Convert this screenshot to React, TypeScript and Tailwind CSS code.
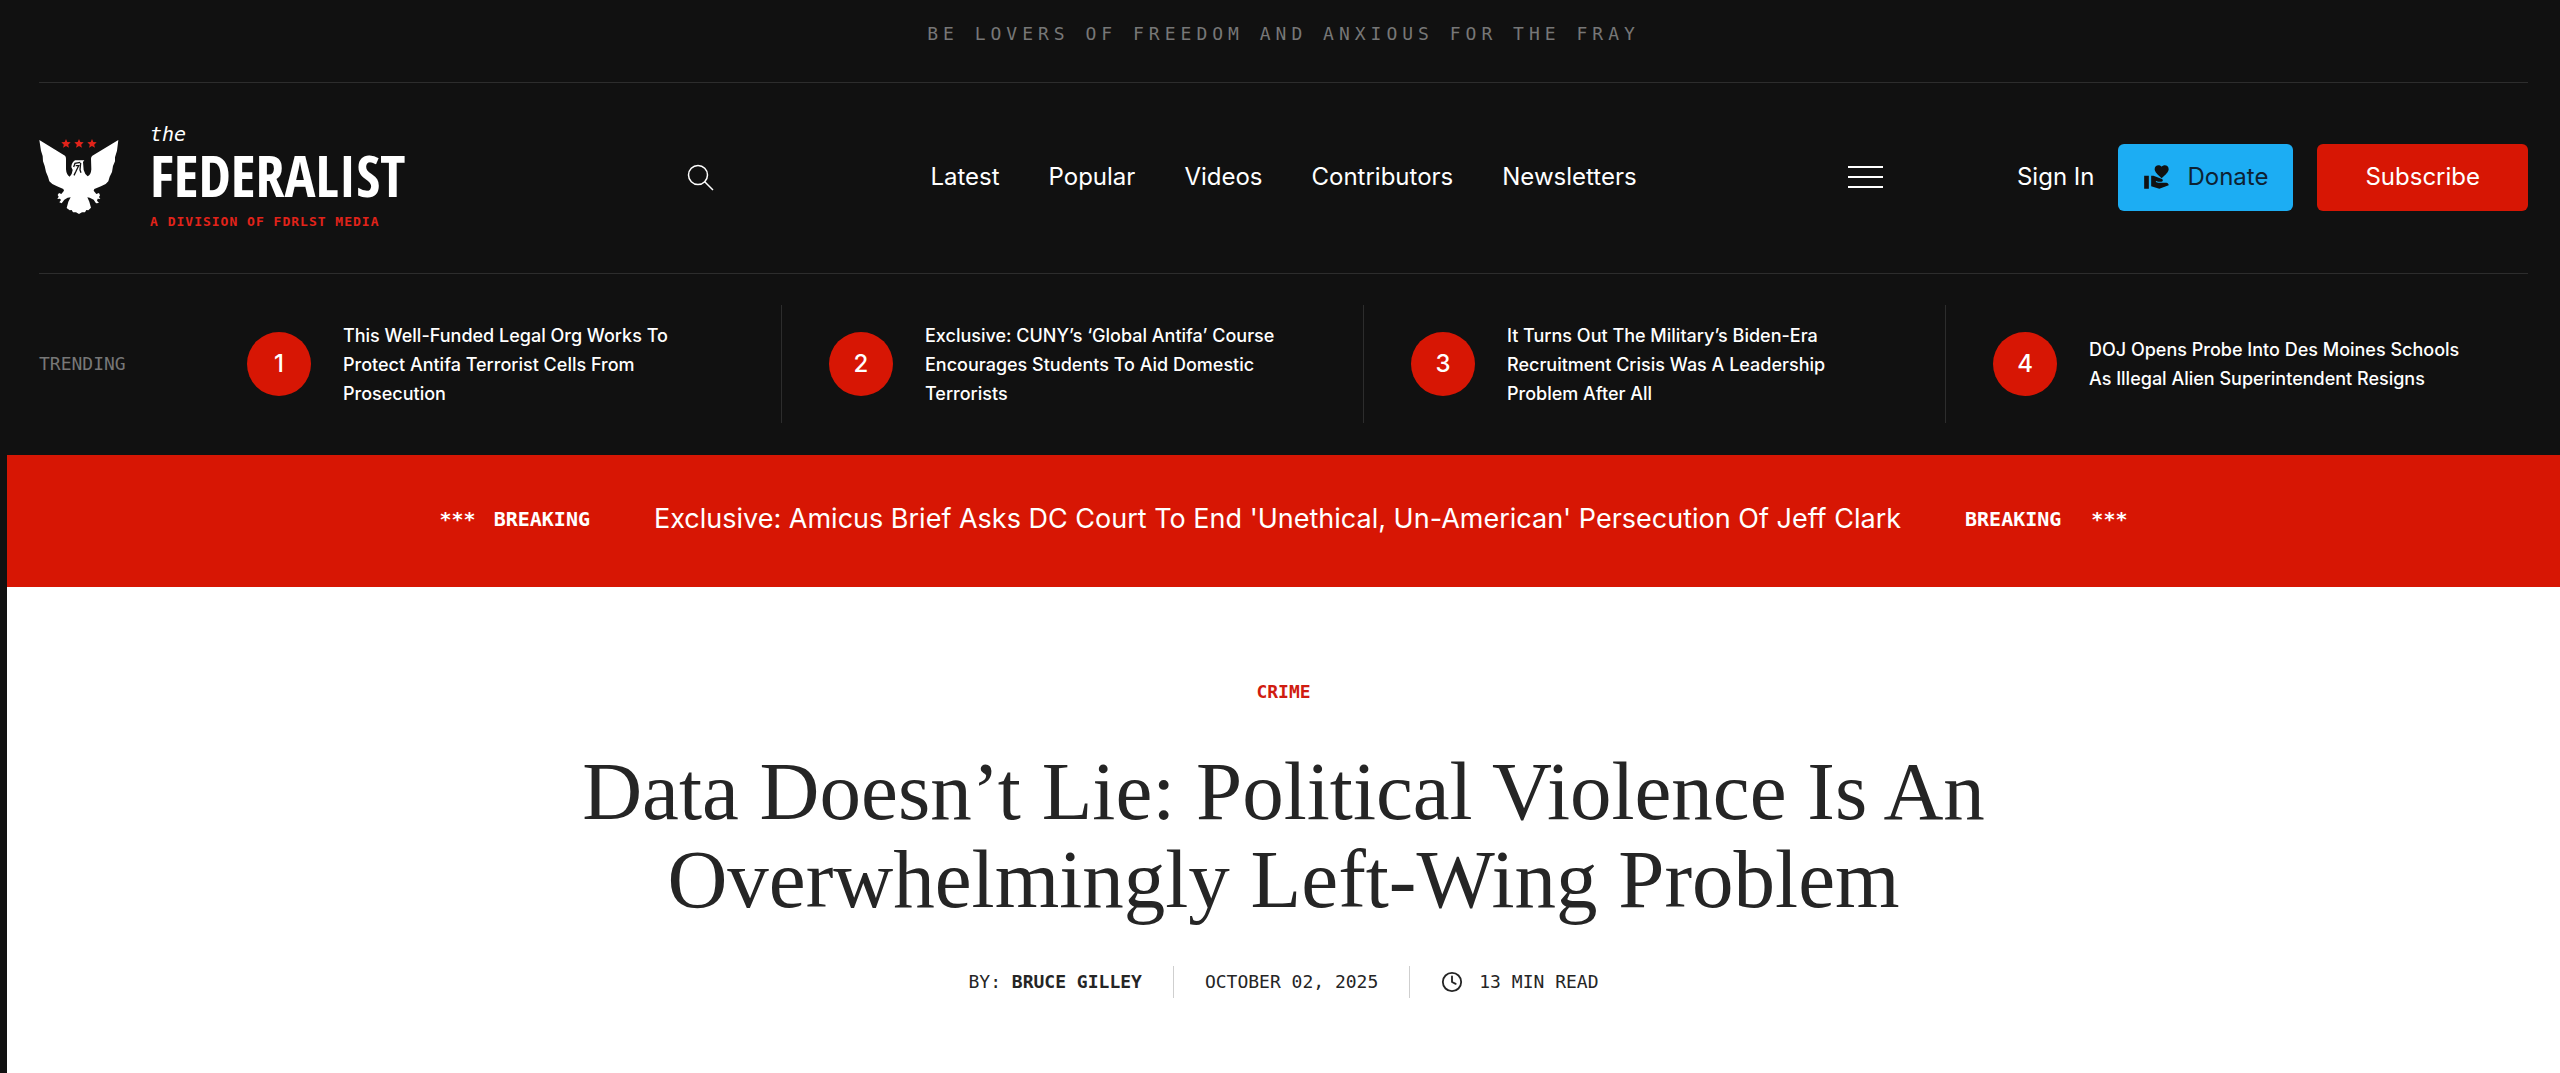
import React from "react";
import { Clock } from "lucide-react";
import { MdVolunteerActivism } from "react-icons/md";

const navLinks = ["Latest", "Popular", "Videos", "Contributors", "Newsletters"];

const trending = [
  "This Well-Funded Legal Org Works To Protect Antifa Terrorist Cells From Prosecution",
  "Exclusive: CUNY’s ‘Global Antifa’ Course Encourages Students To Aid Domestic Terrorists",
  "It Turns Out The Military’s Biden-Era Recruitment Crisis Was A Leadership Problem After All",
  "DOJ Opens Probe Into Des Moines Schools As Illegal Alien Superintendent Resigns",
];

const star = "M0 -14 L4 -5 L14 -4 L6.500 3 L9 12 L0 7 L-9 12 L-6.500 3 L-14 -4 L-4 -5 Z";

function Eagle() {
  return (
    <svg viewBox="26 54 240 232" className="w-20 shrink-0" aria-hidden="true">
      <g fill="#e2231a">
        <path d={star} transform="translate(107 71)" />
        <path d={star} transform="translate(146 71)" />
        <path d={star} transform="translate(185 71)" />
      </g>
      <path
        fill="#fff"
        d="M27 60 L104 107 Q107 110 107 116 L107 148 Q108 164 118 170 Q126 162 127 150 L123 141 Q124 127 134 121 L162 121 L158 126 L160 150 Q164 164 172 169 Q182 164 183 148 L182 116 Q182 110 186 107 L264 60 L260 92 L254 112 L254 124 L248 138 L245 156 L238 170 L234 184 L226 192 L212 199 L192 207 L190 212 L198 222 L206 219 L209 226 L206 231 L210 237 L202 236 L200 242 L206 249 L197 250 L190 239 L178 233 L171 232 L177 245 L182 263 L174 271 L168 270 L164 277 L155 277 L146 282 L137 277 L128 277 L124 270 L118 271 L109 264 L114 245 L121 232 L112 233 L102 239 L94 250 L87 247 L92 240 L89 236 L81 237 L85 230 L82 225 L86 219 L93 222 L101 212 L99 207 L80 199 L66 192 L57 184 L53 170 L47 156 L43 138 L38 124 L37 108 L32 92 Z"
      />
      <path
        d="M130 141 L134 130 L150 127 M136 137 L145 137 L137 154 L131 166 M151 129 L149 150 L152 158"
        fill="none"
        stroke="#111"
        strokeWidth="4"
      />
    </svg>
  );
}

function Logo() {
  return (
    <a href="#" className="flex items-center gap-[31px] text-white" aria-label="The Federalist home">
      <Eagle />
      <span className="flex flex-col font-['DejaVu_Sans_Mono',monospace]">
        <span className="text-xl leading-5 italic">the</span>
        <span className="font-['Open_Sans_Condensed','Roboto_Condensed','Open_Sans',sans-serif] text-[58px] leading-[62px] font-bold">
          FEDERALIST
        </span>
        <span className="mt-2 text-[13px] leading-4 font-bold tracking-[1px] text-[#e2231a]">
          A DIVISION OF FDRLST MEDIA
        </span>
      </span>
    </a>
  );
}

function Header() {
  return (
    <header className="px-8 text-white">
      <p className="border-b border-[#2d2d2d] pt-5 pb-[34px] text-center font-['DejaVu_Sans_Mono',monospace] text-lg leading-7 tracking-[5px] text-[#777]">
        BE LOVERS OF FREEDOM AND ANXIOUS FOR THE FRAY
      </p>

      <div className="grid grid-cols-[1fr_auto_1fr] items-center border-b border-[#2d2d2d] pt-[41px] pb-[43px]">
        <div className="flex items-center justify-between pr-54">
          <Logo />
          <button type="button" aria-label="Search">
            <svg viewBox="0 0 27 27" className="size-[27px]" fill="none" stroke="#fff" strokeWidth="1.5">
              <circle cx="11" cy="11" r="9.500" />
              <path d="M17.500 17.500 L26 26" />
            </svg>
          </button>
        </div>
        <nav className="flex gap-[49px] text-2xl">
          {navLinks.map((label) => (
            <a key={label} href="#">
              {label}
            </a>
          ))}
        </nav>
        <div className="flex items-center justify-between pl-[211px] text-2xl">
          <button type="button" aria-label="Menu" className="flex flex-col gap-2">
            <span className="h-0.5 w-[35px] bg-white" />
            <span className="h-0.5 w-[35px] bg-white" />
            <span className="h-0.5 w-[35px] bg-white" />
          </button>
          <div className="flex items-center gap-6">
            <a href="#">Sign In</a>
            <button
              type="button"
              className="flex h-[67px] items-center gap-4 rounded-md bg-[#1cadf3] px-[25px] text-[#0d2233]"
            >
              <MdVolunteerActivism className="size-7 text-[#111]" />
              Donate
            </button>
            <button type="button" className="h-[67px] rounded-md bg-[#d71604] px-12">
              Subscribe
            </button>
          </div>
        </div>
      </div>

      <section className="flex items-center pt-[31px] pb-8" aria-label="Trending">
        <h2 className="w-[161px] shrink-0 font-['DejaVu_Sans_Mono',monospace] text-lg leading-7 text-[#777]">
          TRENDING
        </h2>
        <ol className="grid flex-1 grid-cols-4">
          {trending.map((title, i) => (
            <li
              key={title}
              className="flex h-[118px] items-center gap-8 border-r border-[#2d2d2d] pr-[52px] pl-[47px] last:border-r-0"
            >
              <span className="flex size-16 shrink-0 items-center justify-center rounded-full bg-[#d71604] text-2xl font-medium">
                {i + 1}
              </span>
              <a href="#" className="text-lg leading-[29px] font-medium">
                {title}
              </a>
            </li>
          ))}
        </ol>
      </section>
    </header>
  );
}

function Breaking() {
  return (
    <a
      href="#"
      className="flex h-[132px] items-center justify-center gap-16 bg-[#d71604] pb-1 text-[27px] whitespace-nowrap text-white"
    >
      <span className="flex gap-[18px] font-['DejaVu_Sans_Mono',monospace] text-xl font-bold">
        <span>***</span>
        <span>BREAKING</span>
      </span>
      <span>Exclusive: Amicus Brief Asks DC Court To End 'Unethical, Un-American' Persecution Of Jeff Clark</span>
      <span className="flex gap-[30px] font-['DejaVu_Sans_Mono',monospace] text-xl font-bold">
        <span>BREAKING</span>
        <span>***</span>
      </span>
    </a>
  );
}

function Article() {
  return (
    <main className="flex flex-1 flex-col items-center bg-white pt-[91px] pb-16 text-[#252525]">
      <a href="#" className="font-['DejaVu_Sans_Mono',monospace] text-lg leading-7 font-bold text-[#d01c10]">
        CRIME
      </a>
      <h1 className="mt-[41px] max-w-[1500px] text-center font-['Liberation_Serif',serif] text-[83px] leading-[88px]">
        Data Doesn’t Lie: Political Violence Is An Overwhelmingly Left-Wing Problem
      </h1>
      <div className="mt-[43px] flex h-8 items-center divide-x divide-[#cfcfcf] font-['DejaVu_Sans_Mono',monospace] text-lg leading-8">
        <span className="pr-[31px]">
          BY:{" "}
          <a href="#" className="font-bold">
            BRUCE GILLEY
          </a>
        </span>
        <time className="px-[31px]" dateTime="2025-10-02">
          OCTOBER 02, 2025
        </time>
        <span className="flex items-center gap-4 pl-[31px]">
          <Clock className="size-[22px]" strokeWidth={2} />
          13 MIN READ
        </span>
      </div>
    </main>
  );
}

export default function App() {
  return (
    <div className="flex min-h-screen flex-col bg-[#111] pl-[7px] font-['Inter',sans-serif]">
      <Header />
      <Breaking />
      <Article />
    </div>
  );
}
